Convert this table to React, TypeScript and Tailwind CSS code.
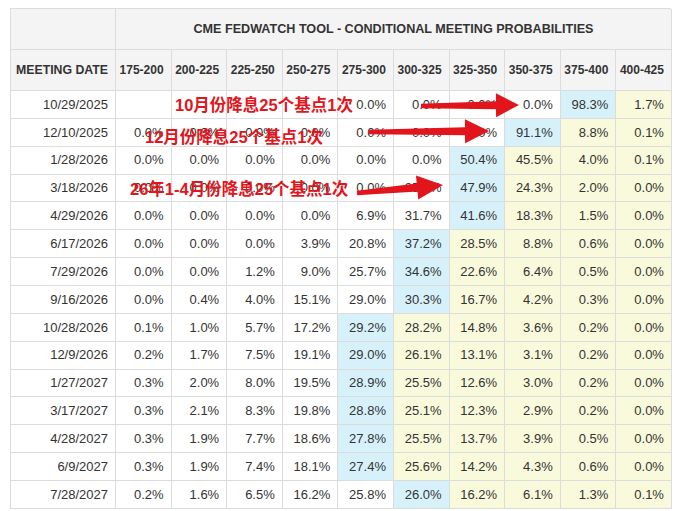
const RANGES = ["175-200", "200-225", "225-250", "250-275", "275-300", "300-325", "325-350", "350-375", "375-400", "400-425"];

// b = index of the blue (max) cell; cells after it are yellow
const ROWS: { date: string; vals: string[]; b: number }[] = [
  { date: "10/29/2025", vals: ["", "", "", "", "0.0%", "0.0%", "0.0%", "0.0%", "98.3%", "1.7%"], b: 8 },
  { date: "12/10/2025", vals: ["0.0%", "0.0%", "0.0%", "0.0%", "0.0%", "0.0%", "0.0%", "91.1%", "8.8%", "0.1%"], b: 7 },
  { date: "1/28/2026", vals: ["0.0%", "0.0%", "0.0%", "0.0%", "0.0%", "0.0%", "50.4%", "45.5%", "4.0%", "0.1%"], b: 6 },
  { date: "3/18/2026", vals: ["0.0%", "0.0%", "0.0%", "0.0%", "0.0%", "25.8%", "47.9%", "24.3%", "2.0%", "0.0%"], b: 6 },
  { date: "4/29/2026", vals: ["0.0%", "0.0%", "0.0%", "0.0%", "6.9%", "31.7%", "41.6%", "18.3%", "1.5%", "0.0%"], b: 6 },
  { date: "6/17/2026", vals: ["0.0%", "0.0%", "0.0%", "3.9%", "20.8%", "37.2%", "28.5%", "8.8%", "0.6%", "0.0%"], b: 5 },
  { date: "7/29/2026", vals: ["0.0%", "0.0%", "1.2%", "9.0%", "25.7%", "34.6%", "22.6%", "6.4%", "0.5%", "0.0%"], b: 5 },
  { date: "9/16/2026", vals: ["0.0%", "0.4%", "4.0%", "15.1%", "29.0%", "30.3%", "16.7%", "4.2%", "0.3%", "0.0%"], b: 5 },
  { date: "10/28/2026", vals: ["0.1%", "1.0%", "5.7%", "17.2%", "29.2%", "28.2%", "14.8%", "3.6%", "0.2%", "0.0%"], b: 4 },
  { date: "12/9/2026", vals: ["0.2%", "1.7%", "7.5%", "19.1%", "29.0%", "26.1%", "13.1%", "3.1%", "0.2%", "0.0%"], b: 4 },
  { date: "1/27/2027", vals: ["0.3%", "2.0%", "8.0%", "19.5%", "28.9%", "25.5%", "12.6%", "3.0%", "0.2%", "0.0%"], b: 4 },
  { date: "3/17/2027", vals: ["0.3%", "2.1%", "8.3%", "19.8%", "28.8%", "25.1%", "12.3%", "2.9%", "0.2%", "0.0%"], b: 4 },
  { date: "4/28/2027", vals: ["0.3%", "1.9%", "7.7%", "18.6%", "27.8%", "25.5%", "13.7%", "3.9%", "0.5%", "0.0%"], b: 4 },
  { date: "6/9/2027", vals: ["0.3%", "1.9%", "7.4%", "18.1%", "27.4%", "25.6%", "14.2%", "4.3%", "0.6%", "0.0%"], b: 4 },
  { date: "7/28/2027", vals: ["0.2%", "1.6%", "6.5%", "16.2%", "25.8%", "26.0%", "16.2%", "6.1%", "1.3%", "0.1%"], b: 5 },
];

const cell = "border-r border-b border-[#dcdcdc] flex items-center justify-end pr-[7px]";
const note = "absolute text-[16.5px] font-bold text-[#e3151c] leading-none whitespace-nowrap";
const noteFont = { fontFamily: '"Liberation Sans", "Noto Sans CJK SC", sans-serif' };

function Arrow({ x1, y1, x2, y2, base }: { x1: number; y1: number; x2: number; y2: number; base: number }) {
  // base = length of the head
  const dx = x2 - x1, dy = y2 - y1;
  const len = Math.hypot(dx, dy);
  const ux = dx / len, uy = dy / len;
  const nx = -uy, ny = ux;
  const bx = x2 - ux * base, by = y2 - uy * base;
  const p = (x: number, y: number) => `${x.toFixed(1)},${y.toFixed(1)}`;
  const pts = [
    p(x1 + nx * 2.2, y1 + ny * 2.2),
    p(bx + nx * 4, by + ny * 4),
    p(bx + nx * 12, by + ny * 12),
    p(x2, y2),
    p(bx - nx * 12, by - ny * 12),
    p(bx - nx * 4, by - ny * 4),
    p(x1 - nx * 2.2, y1 - ny * 2.2),
  ];
  return <polygon points={pts.join(" ")} fill="#e3151c" strokeLinejoin="round" />;
}

export default function App() {
  return (
    <div className="relative w-[677px] h-[511px] overflow-hidden bg-white pt-[8px] pl-[10px] text-[#333]" style={{ fontFamily: '"Liberation Sans", Arial, sans-serif' }}>
      <div className="grid grid-cols-[105px_repeat(10,55.6px)] grid-rows-[41px_41px_repeat(15,27.86px)] border-l border-t border-[#dcdcdc] w-[661px]">
        <div className="border-r border-b border-[#dcdcdc] bg-[#f4f4f4]" />
        <div className="col-span-10 border-r border-b border-[#dcdcdc] bg-[#f4f4f4] flex items-center justify-center text-[12.6px] font-bold">
          CME FEDWATCH TOOL - CONDITIONAL MEETING PROBABILITIES
        </div>
        <div className={`${cell} bg-[#f4f4f4] text-[12.3px] font-bold`}>MEETING DATE</div>
        {RANGES.map(r => (
          <div key={r} className={`${cell} bg-[#f4f4f4] text-[12px] font-bold`}>{r}</div>
        ))}
        {ROWS.map(row => (
          <>
            <div key={row.date} className={`${cell} bg-white text-[13px]`}>{row.date}</div>
            {row.vals.map((v, i) => (
              <div
                key={row.date + i}
                className={`${cell} text-[13px] ${i === row.b ? "bg-[#d7f1fb]" : i > row.b ? "bg-[#f9f9dc]" : "bg-white"}`}
              >
                {v}
              </div>
            ))}
          </>
        ))}
      </div>

      <svg className="absolute left-0 top-0 pointer-events-none" width="677" height="511">
        <Arrow x1={421} y1={106} x2={519} y2={105} base={23} />
        <Arrow x1={369} y1={132} x2={489} y2={131} base={24} />
        <Arrow x1={357} y1={193} x2={443} y2={185} base={26} />
      </svg>

      <div className={`${note} left-[175px] top-[97px]`} style={noteFont}>10月份降息25个基点1次</div>
      <div className={`${note} left-[145px] top-[129px]`} style={noteFont}>12月份降息25个基点1次</div>
      <div className={`${note} left-[130px] top-[181px]`} style={noteFont}>26年1-4月份降息25个基点1次</div>
    </div>
  );
}
